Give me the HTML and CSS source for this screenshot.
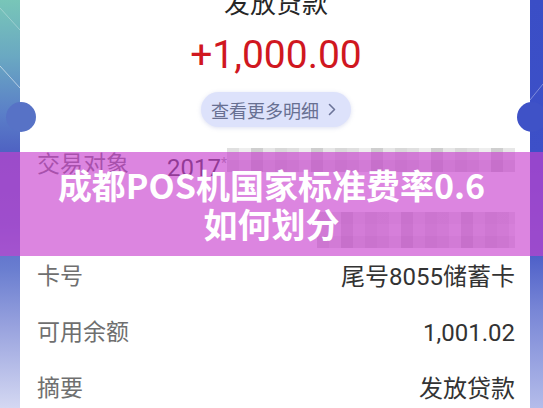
FILE: index.html
```html
<!DOCTYPE html>
<html lang="zh-CN">
<head>
    <meta charset="UTF-8">
    <meta name="viewport" content="width=device-width, initial-scale=1.0">
    <title>成都POS机国家标准费率0.6如何划分</title>
    <link rel="stylesheet" href="styles.css">
</head>
<body>
    <div class="screen">
        <div class="side left">
            <svg width="20" height="408" viewBox="0 0 20 408">
                <line x1="0" y1="8" x2="20" y2="30" stroke="#fff" stroke-opacity="0.3" stroke-width="1"/>
                <line x1="0" y1="66" x2="20" y2="88" stroke="#fff" stroke-opacity="0.55" stroke-width="1"/>
            </svg>
        </div>

        <div class="card">
            <span class="notch notch-left"></span>
            <span class="notch notch-right"></span>

            <div class="title">发放贷款</div>
            <div class="amount">+1,000.00</div>
            <div class="more">
                <span>查看更多明细</span>
                <svg width="8" height="13" viewBox="0 0 8 13">
                    <path d="M1.5 1.5 L6.5 6.5 L1.5 11.5" fill="none" stroke="#6c7499" stroke-width="1.6" stroke-linecap="round" stroke-linejoin="round"/>
                </svg>
            </div>

            <div class="row row-tall">
                <div class="label">交易对象</div>
                <div class="value-lines">
                    <div class="value-line">
                        <span class="value">2017<small>*</small></span>
                        <span class="mosaic mosaic-a"></span>
                    </div>
                    <div class="value-line">
                        <span class="mosaic mosaic-b"></span>
                    </div>
                </div>
            </div>
            <div class="row">
                <div class="label">卡号</div>
                <div class="value">尾号8055储蓄卡</div>
            </div>
            <div class="row">
                <div class="label">可用余额</div>
                <div class="value">1,001.02</div>
            </div>
            <div class="row">
                <div class="label">摘要</div>
                <div class="value">发放贷款</div>
            </div>
        </div>

        <div class="side right">
            <svg width="13" height="408" viewBox="0 0 13 408">
                <line x1="0" y1="100" x2="13" y2="84" stroke="#fff" stroke-opacity="0.35" stroke-width="1"/>
            </svg>
        </div>
    </div>

    <div class="banner">
        <div class="banner-title">成都POS机国家标准费率0.6</div>
        <div class="banner-title">如何划分</div>
    </div>
</body>
</html>
```

FILE: styles.css
```css
body {
    margin: 0;
    padding: 0;
    width: 543px;
    height: 408px;
    overflow: hidden;
    font-family: Roboto, "Noto Sans CJK SC", sans-serif;
    background-color: #fff;
    position: relative;
}
.screen {
    display: flex;
    height: 408px;
}
.side {
    flex: none;
}
.side svg {
    display: block;
}
.side.left {
    width: 20px;
    background: linear-gradient(180deg, #78c6b8 0%, #6aa8c2 14%, #5a7ec8 28%, #4e60c2 38%, #5566c8 55%, #6a7ed0 66%, #98a2de 80%, #d4d8f2 100%);
}
.side.right {
    width: 13px;
    background: linear-gradient(180deg, #3a4ec6 0%, #3d50c8 38%, #4c5ec8 62%, #7886d6 76%, #b4bcea 100%);
}
.card {
    flex: 1;
    background-color: #fff;
    position: relative;
    display: flex;
    flex-direction: column;
    padding: 0 15px 0 17px;
}
.card > * {
    flex-shrink: 0;
}
.notch {
    position: absolute;
    top: 102px;
    width: 30px;
    height: 30px;
    border-radius: 50%;
}
.notch-left {
    left: -14px;
    background-color: #5772c6;
}
.notch-right {
    right: -17px;
    background-color: #3f52c7;
}
.title {
    margin-top: -11px;
    text-align: center;
    font-family: "Noto Sans CJK SC", sans-serif;
    font-size: 26px;
    line-height: 26px;
    color: #262626;
}
.amount {
    margin-top: 18px;
    text-align: center;
    font-size: 39px;
    line-height: 44px;
    color: #d0171f;
}
.more {
    align-self: center;
    margin-top: 15px;
    height: 35px;
    padding: 0 15px 0 10px;
    display: flex;
    align-items: center;
    gap: 9px;
    border-radius: 18px;
    background-color: #dde2fb;
    box-shadow: 0 1px 4px rgba(120, 130, 200, 0.25);
    color: #687092;
    font-family: "Noto Sans CJK SC", sans-serif;
    font-size: 18px;
}
.row {
    display: flex;
    justify-content: space-between;
    align-items: center;
    height: 56px;
    font-size: 23px;
}
.row-tall {
    margin-top: 10px;
    height: 112px;
    align-items: flex-start;
}
.label {
    color: #6f6f6f;
    line-height: 56px;
}
.value {
    color: #333;
    font-size: 24px;
    line-height: 56px;
}
.value small {
    font-size: 14px;
    vertical-align: 8px;
    color: #999;
}
.value-lines {
    display: flex;
    flex-direction: column;
    align-items: flex-end;
}
.value-line {
    height: 56px;
    display: flex;
    align-items: center;
    justify-content: flex-end;
}
.mosaic {
    display: block;
    background-color: #eeeeee;
    background-image:
        repeating-linear-gradient(90deg, rgba(0, 0, 0, 0.06) 0 12px, rgba(0, 0, 0, 0) 12px 24px, rgba(0, 0, 0, 0.13) 24px 36px, rgba(0, 0, 0, 0.03) 36px 48px, rgba(0, 0, 0, 0.09) 48px 60px),
        repeating-linear-gradient(0deg, rgba(0, 0, 0, 0.05) 0 12px, rgba(0, 0, 0, 0) 12px 24px, rgba(0, 0, 0, 0.03) 24px 36px);
}
.mosaic-a {
    width: 288px;
    height: 24px;
    margin-bottom: 10px;
}
.mosaic-b {
    width: 198px;
    height: 36px;
    margin-top: 18px;
}
.banner {
    position: absolute;
    top: 152px;
    left: 0;
    right: 0;
    height: 104px;
    background-color: rgba(200, 64, 206, 0.64);
    display: flex;
    flex-direction: column;
    justify-content: center;
    align-items: center;
}
.banner-title {
    font-family: "Noto Sans CJK SC", sans-serif;
    font-weight: 700;
    font-size: 34px;
    line-height: 39px;
    color: #fff;
    text-align: center;
}
```
